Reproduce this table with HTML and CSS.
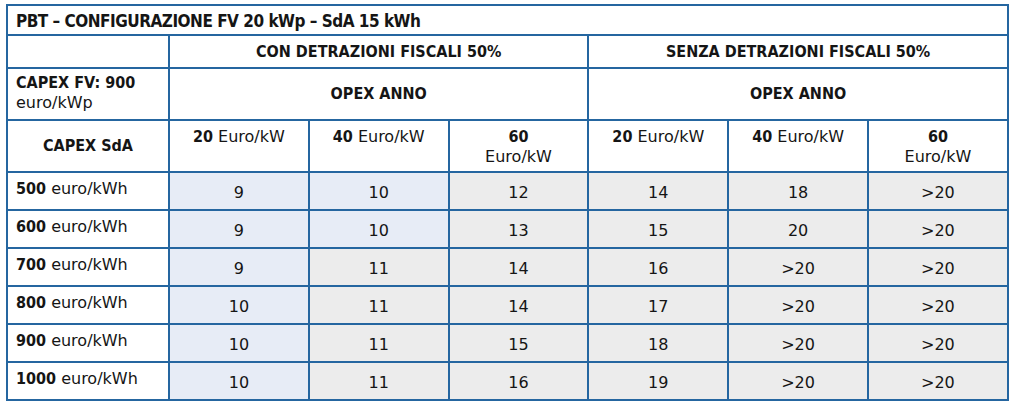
FILE: index.html
```html
<!DOCTYPE html>
<html lang="it">
<head>
<meta charset="utf-8">
<title>PBT – Configurazione FV 20 kWp</title>
<link rel="stylesheet" href="styles.css">
</head>
<body>
<table class="grid">
  <colgroup>
    <col class="c-label">
    <col class="c-data"><col class="c-data"><col class="c-data">
    <col class="c-data"><col class="c-data"><col class="c-data">
  </colgroup>
  <tr class="r-title">
    <th colspan="7" class="title">PBT – CONFIGURAZIONE FV 20 kWp – SdA 15 kWh</th>
  </tr>
  <tr class="r-head">
    <th class="blank"></th>
    <th colspan="3" class="group">CON DETRAZIONI FISCALI 50%</th>
    <th colspan="3" class="group">SENZA DETRAZIONI FISCALI 50%</th>
  </tr>
  <tr class="r-opex">
    <th class="capex-fv"><b>CAPEX FV: 900</b><br>euro/kWp</th>
    <th colspan="3" class="group">OPEX ANNO</th>
    <th colspan="3" class="group">OPEX ANNO</th>
  </tr>
  <tr class="r-sub">
    <th class="capex-sda">CAPEX SdA</th>
    <th class="sub"><b>20</b> Euro/kW</th>
    <th class="sub"><b>40</b> Euro/kW</th>
    <th class="sub"><b>60</b><br>Euro/kW</th>
    <th class="sub"><b>20</b> Euro/kW</th>
    <th class="sub"><b>40</b> Euro/kW</th>
    <th class="sub"><b>60</b><br>Euro/kW</th>
  </tr>
  <tr class="r-data">
    <th class="row-label"><b>500</b> euro/kWh</th>
    <td class="blue">9</td><td class="blue">10</td><td class="gray">12</td>
    <td class="gray">14</td><td class="gray">18</td><td class="gray">&gt;20</td>
  </tr>
  <tr class="r-data">
    <th class="row-label"><b>600</b> euro/kWh</th>
    <td class="blue">9</td><td class="blue">10</td><td class="gray">13</td>
    <td class="gray">15</td><td class="gray">20</td><td class="gray">&gt;20</td>
  </tr>
  <tr class="r-data">
    <th class="row-label"><b>700</b> euro/kWh</th>
    <td class="blue">9</td><td class="gray">11</td><td class="gray">14</td>
    <td class="gray">16</td><td class="gray">&gt;20</td><td class="gray">&gt;20</td>
  </tr>
  <tr class="r-data">
    <th class="row-label"><b>800</b> euro/kWh</th>
    <td class="blue">10</td><td class="gray">11</td><td class="gray">14</td>
    <td class="gray">17</td><td class="gray">&gt;20</td><td class="gray">&gt;20</td>
  </tr>
  <tr class="r-data">
    <th class="row-label"><b>900</b> euro/kWh</th>
    <td class="blue">10</td><td class="gray">11</td><td class="gray">15</td>
    <td class="gray">18</td><td class="gray">&gt;20</td><td class="gray">&gt;20</td>
  </tr>
  <tr class="r-data">
    <th class="row-label"><b>1000</b> euro/kWh</th>
    <td class="blue">10</td><td class="gray">11</td><td class="gray">16</td>
    <td class="gray">19</td><td class="gray">&gt;20</td><td class="gray">&gt;20</td>
  </tr>
</table>
</body>
</html>
```
FILE: styles.css
```css
html, body {
  margin: 0;
  padding: 0;
  background: #ffffff;
}

body {
  padding: 4px 0 0 6px;
  font-family: "DejaVu Sans", "Liberation Sans", sans-serif;
  font-size: 16px;
  color: #151515;
}

.grid {
  border-collapse: collapse;
  table-layout: fixed;
  width: 1001px;
}

.c-label { width: 162px; }
.c-data { width: 139.8px; }

.grid th,
.grid td {
  border: 2px solid #2566a0;
  padding: 0;
  line-height: 20px;
  font-weight: normal;
}

.grid b,
.title,
.group,
.capex-sda {
  font-family: "DejaVu Sans Condensed", "DejaVu Sans", sans-serif;
  font-stretch: condensed;
  font-weight: bold;
}

.grid .title,
.grid .group,
.grid .capex-sda {
  font-weight: bold;
}

.r-title { height: 30px; }
.grid .title {
  text-align: left;
  font-size: 17px;
  letter-spacing: -0.5px;
  padding: 2px 0 0 8px;
}

.r-head { height: 33px; }
.group { text-align: center; }

.r-opex { height: 52px; }
.grid .capex-fv {
  text-align: left;
  vertical-align: top;
  padding: 4px 0 0 8px;
}

.r-sub { height: 52px; }
.capex-sda { text-align: center; }
.grid .sub {
  text-align: center;
  vertical-align: top;
  padding-top: 6px;
}

.r-data { height: 38px; }
.grid .row-label {
  text-align: left;
  vertical-align: top;
  padding: 6px 0 0 8px;
}
.grid .r-data td {
  text-align: center;
  padding-top: 4px;
}

.blue { background: #e7ecf6; }
.gray { background: #ececec; }
```
